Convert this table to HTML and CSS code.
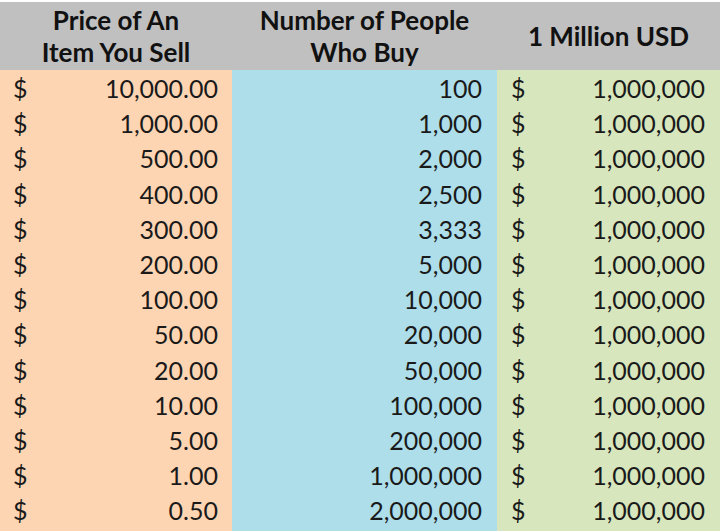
FILE: index.html
```html
<!DOCTYPE html>
<html>
<head>
<meta charset="utf-8">
<link rel="stylesheet" href="styles.css">
</head>
<body>
<div class="sheet">
  <div class="head">Price of An<br>Item You Sell</div>
  <div class="head">Number of People<br>Who Buy</div>
  <div class="head">1 Million USD</div>

  <div class="col price">
    <div class="cell"><span>$</span><span>10,000.00</span></div>
    <div class="cell"><span>$</span><span>1,000.00</span></div>
    <div class="cell"><span>$</span><span>500.00</span></div>
    <div class="cell"><span>$</span><span>400.00</span></div>
    <div class="cell"><span>$</span><span>300.00</span></div>
    <div class="cell"><span>$</span><span>200.00</span></div>
    <div class="cell"><span>$</span><span>100.00</span></div>
    <div class="cell"><span>$</span><span>50.00</span></div>
    <div class="cell"><span>$</span><span>20.00</span></div>
    <div class="cell"><span>$</span><span>10.00</span></div>
    <div class="cell"><span>$</span><span>5.00</span></div>
    <div class="cell"><span>$</span><span>1.00</span></div>
    <div class="cell"><span>$</span><span>0.50</span></div>
  </div>
  <div class="col people">
    <div class="cell"><span>100</span></div>
    <div class="cell"><span>1,000</span></div>
    <div class="cell"><span>2,000</span></div>
    <div class="cell"><span>2,500</span></div>
    <div class="cell"><span>3,333</span></div>
    <div class="cell"><span>5,000</span></div>
    <div class="cell"><span>10,000</span></div>
    <div class="cell"><span>20,000</span></div>
    <div class="cell"><span>50,000</span></div>
    <div class="cell"><span>100,000</span></div>
    <div class="cell"><span>200,000</span></div>
    <div class="cell"><span>1,000,000</span></div>
    <div class="cell"><span>2,000,000</span></div>
  </div>
  <div class="col usd">
    <div class="cell"><span>$</span><span>1,000,000</span></div>
    <div class="cell"><span>$</span><span>1,000,000</span></div>
    <div class="cell"><span>$</span><span>1,000,000</span></div>
    <div class="cell"><span>$</span><span>1,000,000</span></div>
    <div class="cell"><span>$</span><span>1,000,000</span></div>
    <div class="cell"><span>$</span><span>1,000,000</span></div>
    <div class="cell"><span>$</span><span>1,000,000</span></div>
    <div class="cell"><span>$</span><span>1,000,000</span></div>
    <div class="cell"><span>$</span><span>1,000,000</span></div>
    <div class="cell"><span>$</span><span>1,000,000</span></div>
    <div class="cell"><span>$</span><span>1,000,000</span></div>
    <div class="cell"><span>$</span><span>1,000,000</span></div>
    <div class="cell"><span>$</span><span>1,000,000</span></div>
  </div>
</div>
</body>
</html>
```
FILE: styles.css
```css
html, body {
  margin: 0;
  padding: 0;
  background: #ffffff;
}
body {
  font-family: Lato, "Open Sans", sans-serif;
  color: #1a1a1a;
  width: 720px;
  height: 531px;
  overflow: hidden;
}
.sheet {
  display: grid;
  grid-template-columns: 232px 265px 223px;
  padding-top: 2px;
}
.head {
  background: #c0c0c0;
  height: 68px;
  display: flex;
  align-items: center;
  justify-content: center;
  text-align: center;
  font-weight: 700;
  font-size: 26px;
  line-height: 32px;
  color: #111;
}
.col {
  display: flex;
  flex-direction: column;
  padding-top: 1px;
  height: 461px;
}
.price { background: #fdd5b2; }
.people { background: #addeea; }
.usd { background: #d7e6bd; }
.cell {
  height: 35.2px;
  display: flex;
  align-items: center;
  justify-content: space-between;
  font-size: 25px;
  line-height: 35px;
}
.price .cell { padding: 0 14px 0 13px; }
.people .cell { justify-content: flex-end; padding-right: 15px; }
.usd .cell { padding: 0 15px 0 14px; }
```
